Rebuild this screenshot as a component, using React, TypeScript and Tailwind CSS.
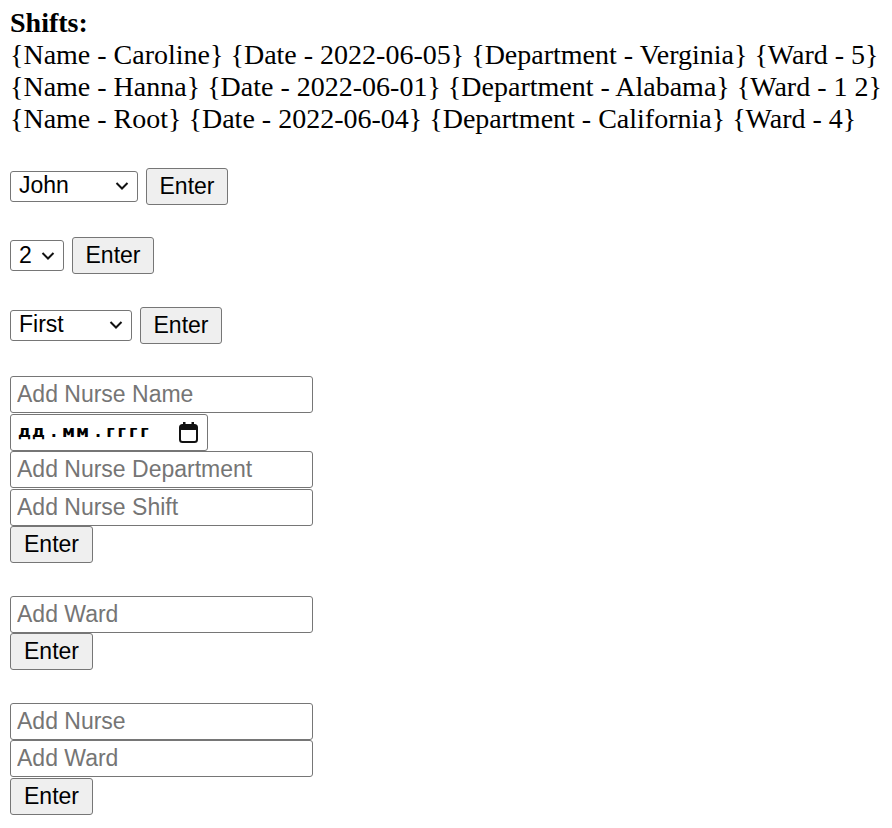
import { useState } from "react";

interface Shift {
  name: string;
  date: string;
  department: string;
  ward: string;
}

const shifts: Shift[] = [
  { name: "Caroline", date: "2022-06-05", department: "Verginia", ward: "5" },
  { name: "Hanna", date: "2022-06-01", department: "Alabama", ward: "1 2" },
  { name: "Root", date: "2022-06-04", department: "California", ward: "4" },
];

const control = "font-['Liberation_Sans',Arial,sans-serif] text-[23px] text-black";
const inputBase = `${control} h-[37px] w-[303px] rounded-[3px] border border-[#767676] bg-white px-[6px] outline-none placeholder:text-[#757575]`;
const buttonBase = `${control} h-[37px] rounded-[3px] border border-[#767676] bg-[#efefef] text-center leading-none`;

function Chevron() {
  return (
    <svg
      className="pointer-events-none absolute right-[9px] top-1/2 -translate-y-1/2"
      width="14"
      height="9"
      viewBox="0 0 14 9"
      fill="none"
    >
      <path d="M1.5 1.5 L7 7 L12.5 1.5" stroke="#111" strokeWidth="2" />
    </svg>
  );
}

function Select({ options, width }: { options: string[]; width: string }) {
  const [value, setValue] = useState(options[0]);
  return (
    <div className="relative">
      <select
        value={value}
        onChange={(e) => setValue(e.target.value)}
        className={`${control} ${width} h-[31px] appearance-none rounded-[3px] border border-[#767676] bg-white pb-[1px] pl-[8px] leading-none outline-none`}
      >
        {options.map((o) => (
          <option key={o}>{o}</option>
        ))}
      </select>
      <Chevron />
    </div>
  );
}

function CalendarIcon() {
  return (
    <svg width="19" height="21" viewBox="0 0 19 21" fill="none">
      <rect x="1" y="3" width="17" height="17" rx="2.5" stroke="#111" strokeWidth="2" />
      <rect x="1" y="3" width="17" height="5" rx="1.5" fill="#111" />
      <rect x="4" y="0" width="2.5" height="4" fill="#111" />
      <rect x="12.5" y="0" width="2.5" height="4" fill="#111" />
    </svg>
  );
}

function DateField() {
  return (
    <div className="flex h-[37px] w-[198px] items-center justify-between rounded-[3px] border border-[#767676] bg-white pl-[7px] pr-[9px]">
      <span className="flex items-center gap-[5px] font-['DejaVu_Sans',sans-serif] text-[16px] font-bold text-black">
        <span className="tracking-[1px]">дд</span>
        <span>.</span>
        <span className="tracking-[1px]">мм</span>
        <span>.</span>
        <span className="tracking-[3px]">гггг</span>
      </span>
      <CalendarIcon />
    </div>
  );
}

function Button({ width = "w-[82px]" }: { width?: string }) {
  return (
    <button type="button" className={`${buttonBase} ${width}`}>
      Enter
    </button>
  );
}

export default function App() {
  return (
    <div className="flex flex-col gap-[32.5px] bg-white pl-[10px] pt-[7px] font-['Liberation_Serif','Times_New_Roman',serif] text-black">
      <div className="text-[28px] leading-[32px]">
        <div className="font-bold">Shifts:</div>
        {shifts.map((s) => (
          <div key={s.name} className="whitespace-nowrap">
            <span>{`{Name - ${s.name}}`}</span> <span>{`{Date - ${s.date}}`}</span>{" "}
            <span>{`{Department - ${s.department}}`}</span> <span>{`{Ward - ${s.ward}}`}</span>
          </div>
        ))}
      </div>

      <div className="flex items-center gap-[8px]">
        <Select options={["John", "Caroline", "Hanna", "Root"]} width="w-[128px]" />
        <Button />
      </div>

      <div className="flex items-center gap-[8px]">
        <Select options={["2", "1", "3", "4", "5"]} width="w-[54px]" />
        <Button />
      </div>

      <div className="flex items-center gap-[8px]">
        <Select options={["First", "Second", "Third"]} width="w-[122px]" />
        <Button />
      </div>

      <div className="flex flex-col items-start gap-[0.5px]">
        <input className={inputBase} placeholder="Add Nurse Name" />
        <DateField />
        <input className={inputBase} placeholder="Add Nurse Department" />
        <input className={inputBase} placeholder="Add Nurse Shift" />
        <Button width="w-[83px]" />
      </div>

      <div className="flex flex-col items-start gap-[0.5px]">
        <input className={inputBase} placeholder="Add Ward" />
        <Button width="w-[83px]" />
      </div>

      <div className="flex flex-col items-start gap-[0.5px]">
        <input className={inputBase} placeholder="Add Nurse" />
        <input className={inputBase} placeholder="Add Ward" />
        <Button width="w-[83px]" />
      </div>
    </div>
  );
}
